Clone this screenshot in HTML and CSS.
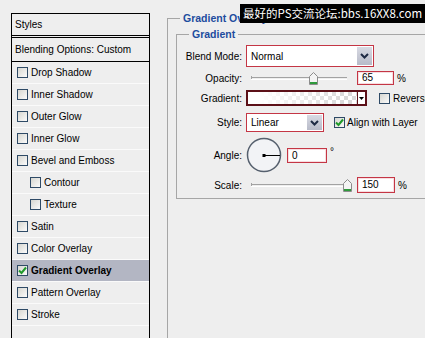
FILE: index.html
```html
<!DOCTYPE html>
<html>
<head lang="en">
    <meta charset="UTF-8">
    <title>Layer Style - Gradient Overlay</title>
    <link rel="stylesheet" href="styles.css">
</head>
<body>
    <div id="dialog">
        <div id="styles">
            <div class="head">Styles</div>
            <div class="blend">Blending Options: Custom</div>
            <ul>
                <li><span class="box"></span>Drop Shadow</li>
                <li><span class="box"></span>Inner Shadow</li>
                <li><span class="box"></span>Outer Glow</li>
                <li><span class="box"></span>Inner Glow</li>
                <li><span class="box"></span>Bevel and Emboss</li>
                <li class="sub"><span class="box"></span>Contour</li>
                <li class="sub"><span class="box"></span>Texture</li>
                <li><span class="box"></span>Satin</li>
                <li><span class="box"></span>Color Overlay</li>
                <li class="selected"><span class="box"><svg width="9" height="9" viewBox="0 0 9 9"><path d="M1 4.5 L3.5 7 L8 1.5" fill="none" stroke="#1f9a2a" stroke-width="2"/></svg></span>Gradient Overlay</li>
                <li><span class="box"></span>Pattern Overlay</li>
                <li><span class="box"></span>Stroke</li>
            </ul>
        </div>

        <fieldset id="overlay">
            <legend>Gradient Overlay</legend>
            <fieldset id="gradient">
                <legend>Gradient</legend>

                <div class="row r1">
                    <label>Blend Mode:</label>
                    <div class="select mode">
                        <span class="value">Normal</span>
                        <span class="drop"><svg width="9" height="6" viewBox="0 0 9 6"><path d="M1 1 L4.5 4.5 L8 1" fill="none" stroke="#1e2a44" stroke-width="2"/></svg></span>
                    </div>
                </div>

                <div class="row r2">
                    <label>Opacity:</label>
                    <div class="slider">
                        <div class="track"></div>
                        <svg class="thumb" style="left: 63px" width="9" height="13" viewBox="0 0 9 13"><path d="M0.5 4.5 L4.5 0.5 L8.5 4.5 V12.5 H0.5 Z" fill="#f4f4f4" stroke="#8c8c8c"/><rect x="1" y="10" width="7" height="2" fill="#2f9a3c"/></svg>
                    </div>
                    <div class="num w37">65</div>
                    <span class="unit">%</span>
                </div>

                <div class="row r3">
                    <label>Gradient:</label>
                    <div class="swatch">
                        <div class="ramp"></div>
                        <div class="arrow"><svg width="5" height="3" viewBox="0 0 5 3"><path d="M0 0 H5 L2.5 3 Z" fill="#000"/></svg></div>
                    </div>
                    <span class="box reverse"></span>
                    <span class="check-label">Reverse</span>
                </div>

                <div class="row r4">
                    <label>Style:</label>
                    <div class="select kind">
                        <span class="value">Linear</span>
                        <span class="drop"><svg width="9" height="6" viewBox="0 0 9 6"><path d="M1 1 L4.5 4.5 L8 1" fill="none" stroke="#1e2a44" stroke-width="2"/></svg></span>
                    </div>
                    <span class="box align"><svg width="9" height="9" viewBox="0 0 9 9"><path d="M1 4.5 L3.5 7 L8 1.5" fill="none" stroke="#1f9a2a" stroke-width="2"/></svg></span>
                    <span class="check-label">Align with Layer</span>
                </div>

                <div class="row r5">
                    <label>Angle:</label>
                    <svg class="dial" width="36" height="36" viewBox="0 0 36 36">
                        <circle cx="18" cy="18" r="16.5" fill="#f2f3f6" stroke="#56606e" stroke-width="1.5"/>
                        <line x1="18" y1="18.5" x2="34" y2="18.5" stroke="#000" stroke-width="1"/>
                        <rect x="16.5" y="17" width="3" height="3" fill="#000"/>
                    </svg>
                    <div class="num w40">0</div>
                    <span class="deg">°</span>
                </div>

                <div class="row r6">
                    <label>Scale:</label>
                    <div class="slider">
                        <div class="track"></div>
                        <svg class="thumb" style="left: 97px" width="9" height="13" viewBox="0 0 9 13"><path d="M0.5 4.5 L4.5 0.5 L8.5 4.5 V12.5 H0.5 Z" fill="#f4f4f4" stroke="#8c8c8c"/><rect x="1" y="10" width="7" height="2" fill="#2f9a3c"/></svg>
                    </div>
                    <div class="num w38">150</div>
                    <span class="unit">%</span>
                </div>
            </fieldset>
        </fieldset>

        <div id="mark">最好的PS交流论坛:bbs.16XX8.com</div>
    </div>
</body>
</html>
```

FILE: styles.css
```css
*{
    margin: 0;
    padding: 0;
}
ul {
    list-style: none;
}
body{
    background: #eeeeee;
    font: 10px "Liberation Sans", Arial, sans-serif;
    color: #000;
}

#dialog{
    position: relative;
    width: 425px;
    height: 338px;
    overflow: hidden;
    display: flex;
    align-items: flex-start;
}

/* left list of styles */
#styles{
    flex: none;
    width: 137px;
    height: 340px;
    margin: 13px 0 0 11px;
    border: 1px solid #000;
    border-bottom: none;
}
#styles .head{
    height: 21px;
    line-height: 21px;
    padding-left: 3px;
    border-bottom: 3px double #000;
}
#styles .blend{
    height: 23px;
    line-height: 23px;
    padding-left: 3px;
    border-bottom: 1px solid #000;
}
#styles li{
    display: flex;
    align-items: center;
    height: 21px;
    padding-left: 5px;
    border-bottom: 1px solid #fafafa;
}
#styles li.sub{
    padding-left: 18px;
}
#styles li.selected{
    background: #b3b6c3;
    font-weight: bold;
}
.box{
    flex: none;
    display: flex;
    align-items: center;
    justify-content: center;
    width: 9px;
    height: 9px;
    margin-right: 3px;
    border: 1px solid #2e4a66;
    background: linear-gradient(135deg, #d6d6d0, #fbfbfb);
}

/* right group boxes */
#overlay{
    flex: none;
    width: 300px;
    height: 340px;
    min-width: 0;
    margin: 12px 0 0 17px;
    padding: 0 0 0 8px;
    border: 1px solid #a6a6a6;
}
#overlay legend,
#gradient legend{
    font-size: 10.5px;
    font-weight: bold;
    line-height: 13px;
    color: #1d4c9e;
    padding: 0 3px;
}
#overlay > legend{
    margin-left: 4px;
}
#gradient{
    width: 280px;
    margin-top: 3px;
    padding: 4px 0 0 0;
    border: 1px solid #a6a6a6;
}
#gradient > legend{
    margin-left: 12px;
}

.row{
    display: flex;
    align-items: center;
}
.row label{
    flex: none;
    width: 65px;
    margin-right: 4px;
    text-align: right;
}
.r1{ height: 22px; }
.r2{ height: 22px; }
.r3{ height: 18px; }
.r4{ height: 31px; }
.r5{ height: 34px; }
.r6{ height: 26px; }

.select{
    display: flex;
    align-items: center;
    justify-content: space-between;
    border: 1px solid #c43645;
    background: #fff;
    box-sizing: border-box;
}
.select .value{
    padding-left: 4px;
}
.select .drop{
    display: flex;
    align-items: center;
    justify-content: center;
    width: 15px;
    margin-right: 1px;
    background: linear-gradient(#d8dae3, #b7bac8);
}
.mode{
    width: 128px;
    height: 22px;
}
.mode .drop{
    height: 18px;
}
.kind{
    width: 78px;
    height: 19px;
}
.kind .drop{
    height: 15px;
}

.slider{
    position: relative;
    flex: none;
    width: 108px;
    height: 14px;
}
.track{
    width: 96px;
    margin: 6px 0 0 5px;
    border-top: 1px solid #a2a2a2;
    border-bottom: 1px solid #fff;
}
.track:before{
    content: "";
    display: block;
    width: 1px;
    height: 3px;
    margin-top: -2px;
    background: #a2a2a2;
}
.thumb{
    position: absolute;
    top: 1px;
}

.num{
    flex: none;
    margin-left: 3px;
    padding-left: 4px;
    box-sizing: border-box;
    border: 1px solid #c43645;
    box-shadow: inset 0 0 0 1px #f7dde0;
    background: #fff;
}
.w37{ width: 37px; height: 14px; line-height: 12px; }
.w38{ width: 38px; height: 16px; line-height: 14px; }
.w40{ width: 40px; height: 15px; line-height: 13px; margin-left: 5px; }
.unit{
    margin-left: 3px;
}
.deg{
    align-self: flex-start;
    margin: 8px 0 0 3px;
}

.swatch{
    display: flex;
    width: 121px;
    height: 16px;
    box-sizing: border-box;
    border: 2px solid #5c1018;
}
.ramp{
    flex: 1;
    background: linear-gradient(to right, #fff 10%, rgba(255,255,255,0) 90%),
                repeating-conic-gradient(#d9d9d9 0 25%, #fff 0 50%) 0 0 / 8px 8px;
}
.arrow{
    display: flex;
    align-items: center;
    justify-content: center;
    width: 7px;
    border-left: 1px solid #5c1018;
    background: #fff;
}
.reverse{
    margin-left: 12px;
}
.align{
    margin-left: 10px;
    margin-right: 2px;
}
.check-label{
    white-space: nowrap;
}

.dial{
    flex: none;
}

#mark{
    position: absolute;
    left: 240px;
    top: 4px;
    width: 185px;
    height: 19px;
    padding-left: 3px;
    box-sizing: border-box;
    background: #000;
    color: #fff;
    font: 11.5px/19px "Noto Sans CJK SC", "Liberation Sans", sans-serif;
    white-space: nowrap;
}
```
